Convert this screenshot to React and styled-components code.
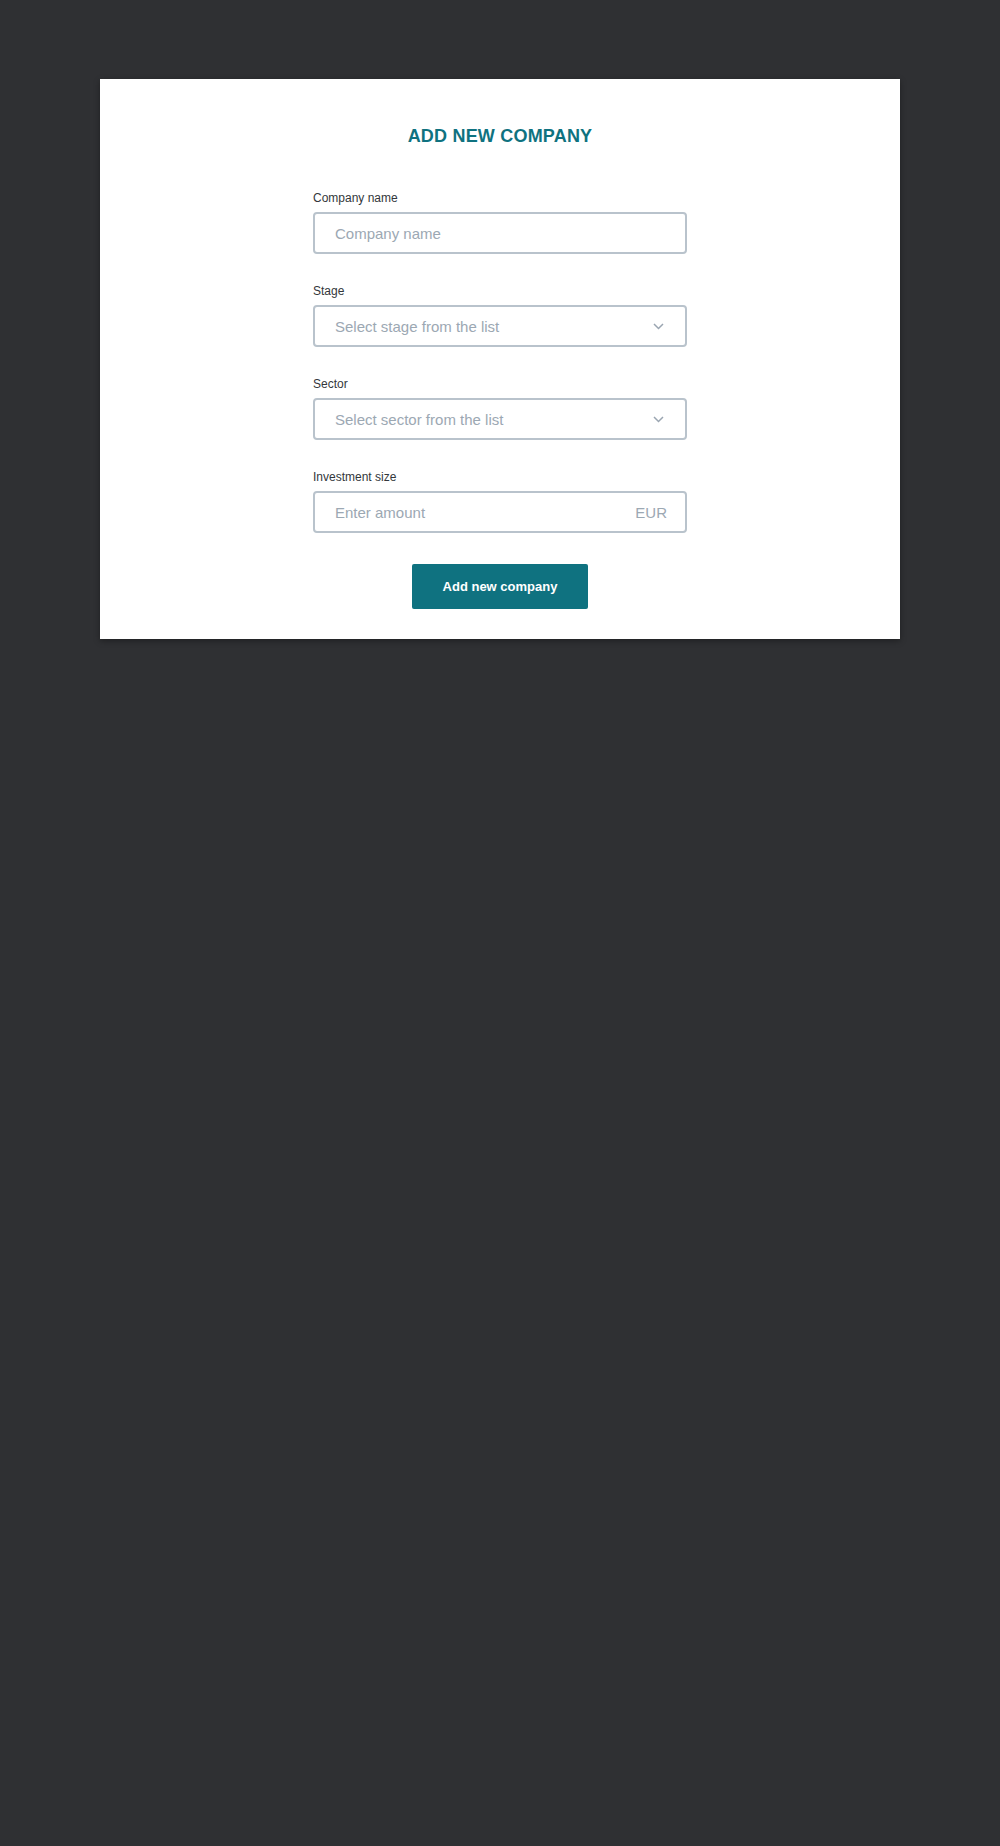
import React, { useState } from "react";
import styled, { createGlobalStyle } from "styled-components";

const GlobalStyle = createGlobalStyle`
  body {
    margin: 0;
    background-color: #2f3033;
    font-family: "Liberation Sans", Arial, sans-serif;
  }
`;

function Chevron() {
  return (
    <svg width="11" height="7" viewBox="0 0 11 7" fill="none">
      <path d="M1 1l4.5 4.5L10 1" stroke="#9aa5b1" strokeWidth="1.5" />
    </svg>
  );
}

function App() {
  const [name, setName] = useState("");
  const [amount, setAmount] = useState("");

  return (
    <Page>
      <GlobalStyle />
      <Card>
        <Title>ADD NEW COMPANY</Title>
        <Form>
          <Field>
            <Label htmlFor="companyName">Company name</Label>
            <Input
              id="companyName"
              placeholder="Company name"
              value={name}
              onChange={(e) => setName(e.target.value)}
            />
          </Field>
          <Field>
            <Label>Stage</Label>
            <Select type="button">
              <span>Select stage from the list</span>
              <Chevron />
            </Select>
          </Field>
          <Field>
            <Label>Sector</Label>
            <Select type="button">
              <span>Select sector from the list</span>
              <Chevron />
            </Select>
          </Field>
          <Field>
            <Label htmlFor="amount">Investment size</Label>
            <AmountBox>
              <AmountInput
                id="amount"
                placeholder="Enter amount"
                value={amount}
                onChange={(e) => setAmount(e.target.value)}
              />
              <Currency>EUR</Currency>
            </AmountBox>
          </Field>
          <SubmitButton type="button">Add new company</SubmitButton>
        </Form>
      </Card>
    </Page>
  );
}

const Page = styled.div`
  min-height: 1846px;
  padding-top: 79px;
  box-sizing: border-box;
`;

const Card = styled.div`
  width: 800px;
  margin: 0 auto;
  background-color: #ffffff;
  box-shadow: 0 2px 6px rgba(0, 0, 0, 0.35);
  padding: 47px 0 30px;
  box-sizing: border-box;
`;

const Title = styled.h1`
  margin: 0 0 44px;
  font-size: 18px;
  line-height: 21px;
  font-weight: 700;
  letter-spacing: 0.2px;
  text-align: center;
  color: #0f7280;
`;

const Form = styled.div`
  width: 374px;
  margin: 0 auto;
  display: flex;
  flex-direction: column;
  gap: 30px;
`;

const Field = styled.div`
  display: flex;
  flex-direction: column;
`;

const Label = styled.label`
  font-size: 12px;
  line-height: 14px;
  color: #33373b;
  margin-bottom: 7px;
`;

const boxStyles = `
  box-sizing: border-box;
  width: 100%;
  height: 42px;
  border: 2px solid #b9c3cc;
  border-radius: 4px;
  background: #ffffff;
  font-family: "Liberation Sans", Arial, sans-serif;
  font-size: 15px;
`;

const Input = styled.input`
  ${boxStyles}
  padding: 0 18px 0 20px;
  color: #2d3033;
  outline: none;
  &::placeholder {
    color: #9ca8b3;
  }
`;

const Select = styled.button`
  ${boxStyles}
  display: flex;
  align-items: center;
  justify-content: space-between;
  padding: 0 21px 0 20px;
  color: #9ca8b3;
  text-align: left;
  cursor: pointer;
`;

const AmountBox = styled.div`
  ${boxStyles}
  display: flex;
  align-items: center;
  padding: 0 18px 0 20px;
`;

const AmountInput = styled.input`
  flex: 1;
  border: none;
  outline: none;
  padding: 0;
  font-family: inherit;
  font-size: 15px;
  color: #2d3033;
  &::placeholder {
    color: #9ca8b3;
  }
`;

const Currency = styled.span`
  color: #9ca8b3;
  font-size: 15px;
`;

const SubmitButton = styled.button`
  align-self: center;
  margin-top: 1px;
  width: 176px;
  height: 45px;
  border: none;
  border-radius: 2px;
  background-color: #0f7280;
  color: #ffffff;
  font-family: "Liberation Sans", Arial, sans-serif;
  font-size: 13px;
  font-weight: 700;
  cursor: pointer;
`;

export default App;
